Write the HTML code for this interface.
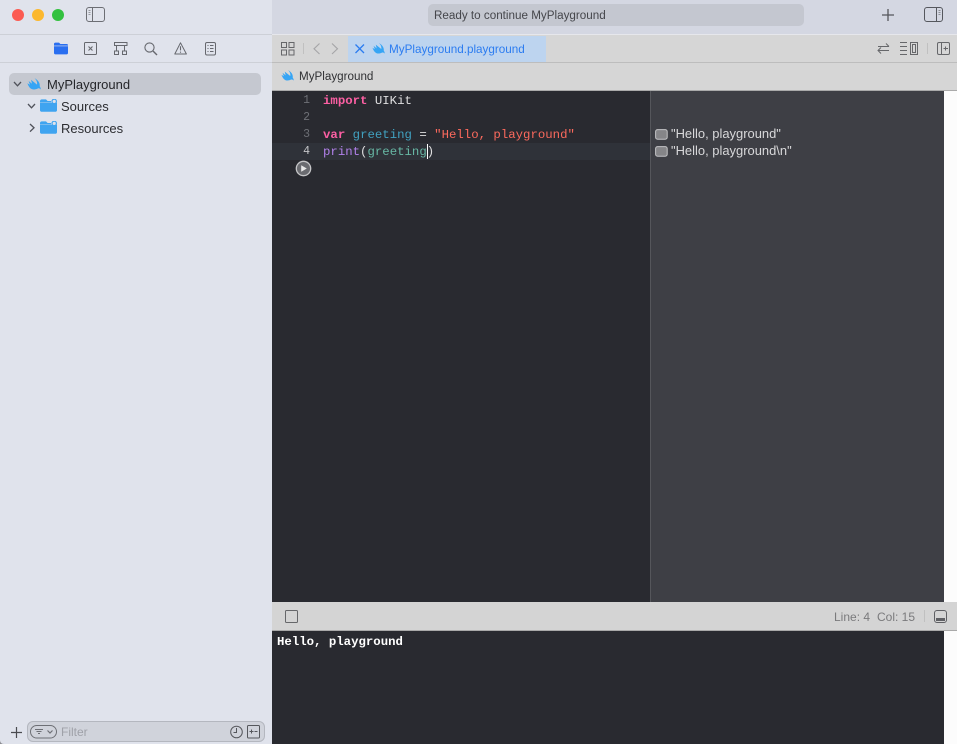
<!DOCTYPE html>
<html><head><meta charset="utf-8">
<style>
html,body{margin:0;padding:0;width:957px;height:744px;overflow:hidden;background:#fff}
body{position:relative;font-family:"Liberation Sans",sans-serif}
.a{position:absolute}
.t{position:absolute;white-space:pre;line-height:16px}
.m{font-family:"Liberation Mono",monospace;font-size:12.35px;-webkit-font-smoothing:antialiased}
svg{position:absolute;overflow:visible}
</style></head><body>
<svg width="0" height="0" style="position:absolute"><defs>
<symbol id="sw" viewBox="0 0 14 12"><path d="M0.4 5.2 3 6.8 1.6 3 5 5.8 4 1.8 10 6.6C10.5 4.6 9.6 2 7.6.2 10.8 1.8 13.3 5 12.7 8.3 13.5 9.4 13.9 10.6 13.7 11.6 13 10.5 12 10.1 11 10.4 9 11.5 6.6 11.8 4.6 11 2.8 10.2 1.4 8 .4 5.2Z" fill="#36a5f5"/></symbol>
<symbol id="fd" viewBox="0 0 17 13"><path d="M0 2.2C0 1 .8.4 1.8.4H6L7.6 2H11V3.4H0Z" fill="#3fa4f0"/><path d="M0 3.8H17V11.2C17 12.2 16.2 12.8 15.2 12.8H1.8C.8 12.8 0 12.2 0 11.2Z" fill="#3fa4f0"/><circle cx="14.2" cy="2.4" r="2.2" fill="#e0e3ec" stroke="#3fa4f0" stroke-width="1.2"/></symbol>
</defs></svg>

<!-- sidebar -->
<div class="a" style="left:0;top:0;width:272px;height:744px;background:#e0e3ec"></div>
<div class="a" style="left:0;top:34px;width:272px;height:1px;background:#cdd0d7"></div>
<div class="a" style="left:0;top:62px;width:272px;height:1px;background:#cdd0d7"></div>
<svg style="left:0;top:740px" width="4" height="4"><path d="M0 0C0 2.4 1.6 4 4 4H0Z" fill="#8a8b90"/></svg>

<!-- traffic lights -->
<div class="a" style="left:12px;top:9px;width:12px;height:12px;border-radius:50%;background:#fb5b52"></div>
<div class="a" style="left:32px;top:9px;width:12px;height:12px;border-radius:50%;background:#fcb82e"></div>
<div class="a" style="left:52px;top:9px;width:12px;height:12px;border-radius:50%;background:#33c13f"></div>

<svg style="left:86px;top:7px" width="20" height="16" fill="none" stroke="#6c6e74" stroke-width="1"><rect x=".5" y=".5" width="18" height="14" rx="2.5"/><path d="M6.5 .5V14.5"/><path d="M2.5 3.5H4.5M2.5 5.5H4.5M2.5 7.5H4.5" stroke="#96989e"/></svg>

<!-- navigator icons -->
<svg style="left:54px;top:42px" width="14" height="13"><path d="M0 2C0 1 .6.6 1.4.6H5L6.4 2H12.6C13.4 2 14 2.4 14 3.2V3.6H0Z" fill="#2a6ff0"/><path d="M0 4.2H14V11C14 11.8 13.4 12.4 12.6 12.4H1.4C.6 12.4 0 11.8 0 11Z" fill="#2a6ff0"/></svg>
<svg style="left:84px;top:42px" width="14" height="14" fill="none" stroke="#66686e"><rect x=".5" y=".5" width="12" height="12" rx="1"/><path d="M4.5 4.5 8.5 8.5M8.5 4.5 4.5 8.5" stroke-width="1.1"/></svg>
<svg style="left:114px;top:42px" width="14" height="14" fill="none" stroke="#66686e"><rect x=".5" y=".5" width="12.5" height="3"/><path d="M2.5 3.5V9M10.5 3.5V9"/><rect x=".5" y="9" width="4" height="3.5"/><rect x="8.5" y="9" width="4" height="3.5"/></svg>
<svg style="left:144px;top:42px" width="14" height="14" fill="none" stroke="#66686e" stroke-width="1.1"><circle cx="5.5" cy="5.5" r="4.6"/><path d="M9 9 13 13" stroke-width="1.4"/></svg>
<svg style="left:174px;top:42px" width="14" height="14" fill="none" stroke="#66686e"><path d="M6.5 .8 .8 12H12.4Z" stroke-linejoin="round"/><path d="M6.5 4.2V8.4M6.5 9.6V10.8" stroke-width="1.1"/></svg>
<svg style="left:205px;top:42px" width="12" height="14" fill="none" stroke="#66686e"><rect x=".5" y=".5" width="10" height="12.5" rx="1.5"/><path d="M2.5 3.5H3.5M5 3.5H8.5M2.5 6.5H3.5M5 6.5H8.5M2.5 9.5H3.5M5 9.5H8.5"/></svg>

<!-- tree -->
<div class="a" style="left:9px;top:73px;width:252px;height:22px;background:#c5c8d0;border-radius:5px"></div>
<svg style="left:13px;top:81px" width="10" height="7" fill="none" stroke="#50525a" stroke-width="1.3"><path d="M1 1 4.5 4.8 8 1"/></svg>
<svg style="left:27px;top:78px" width="14" height="13"><use href="#sw" width="14" height="12"/></svg>
<div class="t" style="left:47px;top:77px;font-size:13px;color:#25262a">MyPlayground</div>
<svg style="left:27px;top:103px" width="10" height="7" fill="none" stroke="#50525a" stroke-width="1.3"><path d="M1 1 4.5 4.8 8 1"/></svg>
<svg style="left:40px;top:99px" width="17" height="13"><use href="#fd" width="17" height="13"/></svg>
<div class="t" style="left:61px;top:99px;font-size:13px;color:#2c2d31">Sources</div>
<svg style="left:29px;top:123px" width="7" height="10" fill="none" stroke="#50525a" stroke-width="1.3"><path d="M1 1 5 4.8 1 8.6"/></svg>
<svg style="left:40px;top:121px" width="17" height="13"><use href="#fd" width="17" height="13"/></svg>
<div class="t" style="left:61px;top:121px;font-size:13px;color:#2c2d31">Resources</div>

<!-- filter -->
<svg style="left:11px;top:727px" width="11" height="11" stroke="#4a4b50" stroke-width="1.2"><path d="M0 5.5H11M5.5 0V11"/></svg>
<div class="a" style="left:27px;top:721px;width:238px;height:21px;box-sizing:border-box;background:#d0d3db;border:1px solid #b4b7bf;border-radius:6px"></div>
<svg style="left:30px;top:725px" width="28" height="14" fill="none" stroke="#6d6f75"><rect x=".5" y=".5" width="26" height="12.5" rx="6.2"/><path d="M5 4.5H13M6.5 6.5H11.5M8 8.5H10"/><path d="M17.5 5.5 20 8 22.5 5.5" stroke-width="1.2"/></svg>
<div class="t" style="left:61px;top:724px;font-size:12px;color:#9fa1a8">Filter</div>
<svg style="left:230px;top:725px" width="14" height="14" fill="none" stroke="#55575c"><circle cx="6.5" cy="7" r="5.8"/><path d="M6.5 3V7.5H3.5"/></svg>
<svg style="left:247px;top:725px" width="14" height="14" fill="none" stroke="#55575c"><rect x=".5" y=".5" width="12" height="12.5" rx="1"/><path d="M2.5 6.5H6.5M4.5 4.5V8.5M7.5 6.5H10.5"/></svg>

<!-- titlebar -->
<div class="a" style="left:272px;top:0;width:685px;height:34px;background:#d4d7e2"></div>
<div class="a" style="left:272px;top:34px;width:685px;height:1px;background:#e6e7ec"></div>
<div class="a" style="left:428px;top:4px;width:376px;height:22px;background:#c4c7d0;border-radius:5px"></div>
<div class="t" style="left:434px;top:8px;font-size:11.67px;color:#45464b">Ready to continue MyPlayground</div>
<svg style="left:882px;top:9px" width="12" height="12" stroke="#55565b" stroke-width="1.3"><path d="M0 6H12M6 0V12"/></svg>
<svg style="left:924px;top:7px" width="20" height="16" fill="none" stroke="#55575d"><rect x=".5" y=".5" width="18" height="14" rx="2.5"/><path d="M12.5 .5V14.5"/><path d="M14.5 3.5H16.5M14.5 5.5H16.5M14.5 7.5H16.5" stroke="#8d8f95"/></svg>

<!-- tab bar -->
<div class="a" style="left:272px;top:35px;width:685px;height:27px;background:#d6d6d6"></div>
<div class="a" style="left:272px;top:62px;width:685px;height:1px;background:#bdbdbd"></div>
<svg style="left:281px;top:42px" width="14" height="14" fill="none" stroke="#66676a"><rect x=".5" y=".5" width="5" height="5"/><rect x="8" y=".5" width="5" height="5"/><rect x=".5" y="8" width="5" height="5"/><rect x="8" y="8" width="5" height="5"/></svg>
<div class="a" style="left:303px;top:43px;width:1px;height:11px;background:#c0c0c0"></div>
<svg style="left:313px;top:43px" width="8" height="12" fill="none" stroke="#a5a5a7" stroke-width="1.1"><path d="M6.5 .5 1 5.8 6.5 11"/></svg>
<svg style="left:331px;top:43px" width="8" height="12" fill="none" stroke="#a5a5a7" stroke-width="1.1"><path d="M1 .5 6.5 5.8 1 11"/></svg>
<div class="a" style="left:348px;top:36px;width:198px;height:26px;background:#bdd4ef"></div>
<svg style="left:355px;top:44px" width="10" height="10" stroke="#2b7cf0" stroke-width="1.3"><path d="M.5 .5 9 9M9 .5 .5 9"/></svg>
<svg style="left:372px;top:43px" width="13" height="12"><use href="#sw" width="13" height="11"/></svg>
<div class="t" style="left:389px;top:42px;font-size:11.7px;color:#2b7cf0">MyPlayground.playground</div>
<svg style="left:877px;top:42px" width="13" height="14" fill="none" stroke="#66676a"><path d="M1 4.5H12M9 1.5 12 4.5M12 8.5H1M4 5.5 1 8.5 4 11.5"/></svg>
<svg style="left:900px;top:42px" width="18" height="14" fill="none" stroke="#66676a"><path d="M0 .5H7M0 4.5H7M0 8.5H7M0 12.5H7"/><rect x="10.5" y=".5" width="7" height="12"/><rect x="12.5" y="2.5" width="3" height="8"/></svg>
<div class="a" style="left:927px;top:43px;width:1px;height:11px;background:#c0c0c0"></div>
<svg style="left:937px;top:42px" width="14" height="14" fill="none" stroke="#66676a"><rect x=".5" y=".5" width="12" height="12" rx="1.5"/><path d="M4.5 .5V12.5M6.5 6.5H11M8.5 4.5V8.5"/></svg>

<!-- jump bar -->
<div class="a" style="left:272px;top:63px;width:685px;height:27px;background:#d6d6d6"></div>
<div class="a" style="left:272px;top:90px;width:685px;height:1px;background:#aaaaaa"></div>
<svg style="left:281px;top:70px" width="13" height="12"><use href="#sw" width="13" height="11"/></svg>
<div class="t" style="left:299px;top:69px;font-size:11.65px;color:#303134">MyPlayground</div>

<!-- editor -->
<div class="a" style="left:272px;top:91px;width:379px;height:511px;background:#292a30"></div>
<div class="a" style="left:272px;top:143px;width:378px;height:17px;background:#2f3239"></div>
<div class="a" style="left:650px;top:91px;width:1px;height:511px;background:#55565b"></div>
<div class="a" style="left:651px;top:91px;width:293px;height:511px;background:#3e3f45"></div>
<div class="a" style="left:944px;top:91px;width:13px;height:540px;background:#fcfcfc"></div>

<div class="t" style="left:272px;width:38px;text-align:right;top:93px;font-size:11.5px;font-family:'Liberation Mono',monospace;color:#6e7076">1</div>
<div class="t" style="left:272px;width:38px;text-align:right;top:110px;font-size:11.5px;font-family:'Liberation Mono',monospace;color:#6e7076">2</div>
<div class="t" style="left:272px;width:38px;text-align:right;top:127px;font-size:11.5px;font-family:'Liberation Mono',monospace;color:#6e7076">3</div>
<div class="t" style="left:272px;width:38px;text-align:right;top:144px;font-size:11.5px;font-family:'Liberation Mono',monospace;color:#c4c5c8">4</div>

<div class="t m" style="left:323px;top:93px;color:#dfdfe0"><b style="color:#fc5fa3">import</b> UIKit</div>
<div class="t m" style="left:323px;top:127px;color:#dfdfe0"><b style="color:#fc5fa3">var</b> <span style="color:#41a1c0">greeting</span> = <span style="color:#fc6a5d">"Hello, playground"</span></div>
<div class="t m" style="left:323px;top:144px;color:#dfdfe0"><span style="color:#b281eb">print</span>(<span style="color:#67b7a4">greeting</span>)</div>
<div class="a" style="left:427px;top:144px;width:1px;height:15px;background:#fff"></div>

<!-- run button -->
<svg style="left:295px;top:160px" width="17" height="17"><circle cx="8.5" cy="8.5" r="7.2" fill="#6a6b70" stroke="#c6c6c8" stroke-width="1.3"/><path d="M6.2 5.3 11.8 8.5 6.2 11.7Z" fill="#e8e8e8"/></svg>

<!-- results -->
<svg style="left:655px;top:129px" width="13" height="11"><rect x=".6" y=".6" width="11.6" height="9.6" rx="2" fill="#858588" stroke="#c4c4c6" stroke-width="1"/></svg>
<svg style="left:655px;top:146px" width="13" height="11"><rect x=".6" y=".6" width="11.6" height="9.6" rx="2" fill="#858588" stroke="#c4c4c6" stroke-width="1"/></svg>
<div class="t" style="left:671px;top:126px;font-size:12.95px;color:#d8d8da">"Hello, playground"</div>
<div class="t" style="left:671px;top:143px;font-size:12.95px;color:#d8d8da">"Hello, playground\n"</div>

<!-- debug bar -->
<div class="a" style="left:272px;top:602px;width:685px;height:28px;background:#d4d4d4"></div>
<div class="a" style="left:272px;top:630px;width:685px;height:1px;background:#a9a9a9"></div>
<div class="a" style="left:285px;top:610px;width:13px;height:13px;box-sizing:border-box;border:1px solid #66676a;border-radius:1.5px"></div>
<div class="t" style="left:834px;top:609px;font-size:12px;color:#7a7a7c">Line: 4</div>
<div class="t" style="left:877px;top:609px;font-size:12px;color:#7a7a7c">Col: 15</div>
<div class="a" style="left:924px;top:610px;width:1px;height:12px;background:#c0c0c0"></div>
<svg style="left:934px;top:610px" width="13" height="13" fill="none" stroke="#5f6064"><rect x=".5" y=".5" width="12" height="12" rx="2.5"/><rect x="2" y="8" width="9" height="3" fill="#5f6064" stroke="none"/></svg>

<!-- console -->
<div class="a" style="left:272px;top:631px;width:672px;height:113px;background:#292a30"></div>
<div class="a" style="left:944px;top:631px;width:13px;height:113px;background:#fcfcfc"></div>
<div class="t m" style="left:277px;top:634px;color:#fff;font-weight:bold">Hello, playground</div>
</body></html>
